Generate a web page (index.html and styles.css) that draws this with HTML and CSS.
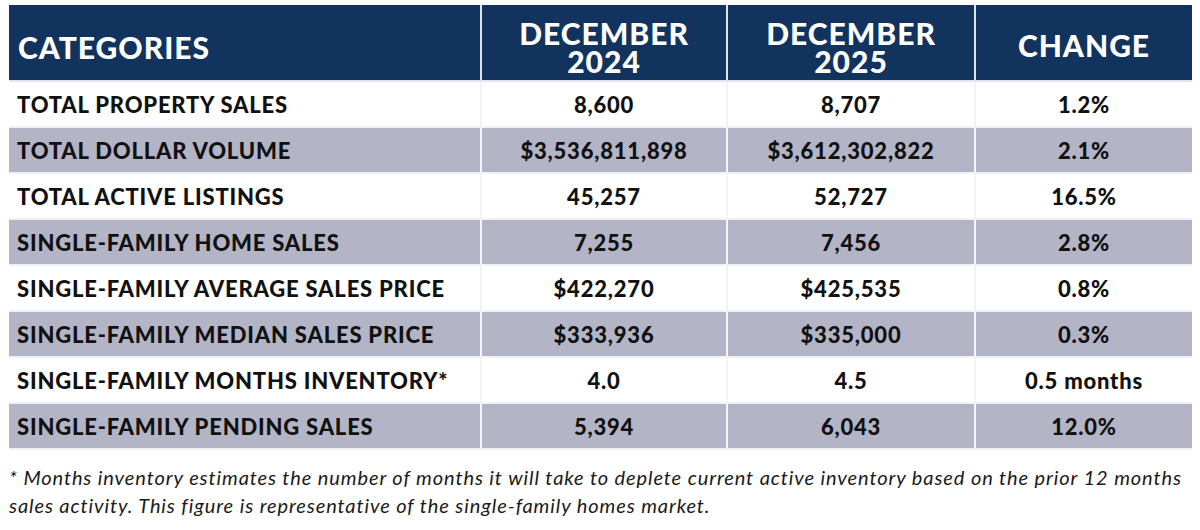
FILE: index.html
```html
<!DOCTYPE html>
<html>
<head>
<meta charset="utf-8">
<link rel="stylesheet" href="styles.css">
</head>
<body>
<table class="stats">
  <colgroup>
    <col class="c1"><col class="c2"><col class="c3"><col class="c4">
  </colgroup>
  <thead>
    <tr>
      <th class="cat">CATEGORIES</th>
      <th class="yr">DECEMBER<br>2024</th>
      <th class="yr">DECEMBER<br>2025</th>
      <th class="chg">CHANGE</th>
    </tr>
  </thead>
  <tbody>
    <tr><td class="cat">TOTAL PROPERTY SALES</td><td>8,600</td><td>8,707</td><td>1.2%</td></tr>
    <tr class="alt"><td class="cat">TOTAL DOLLAR VOLUME</td><td>$3,536,811,898</td><td>$3,612,302,822</td><td>2.1%</td></tr>
    <tr><td class="cat">TOTAL ACTIVE LISTINGS</td><td>45,257</td><td>52,727</td><td>16.5%</td></tr>
    <tr class="alt"><td class="cat">SINGLE-FAMILY HOME SALES</td><td>7,255</td><td>7,456</td><td>2.8%</td></tr>
    <tr><td class="cat">SINGLE-FAMILY AVERAGE SALES PRICE</td><td>$422,270</td><td>$425,535</td><td>0.8%</td></tr>
    <tr class="alt"><td class="cat">SINGLE-FAMILY MEDIAN SALES PRICE</td><td>$333,936</td><td>$335,000</td><td>0.3%</td></tr>
    <tr><td class="cat">SINGLE-FAMILY MONTHS INVENTORY*</td><td>4.0</td><td>4.5</td><td>0.5 months</td></tr>
    <tr class="alt"><td class="cat">SINGLE-FAMILY PENDING SALES</td><td>5,394</td><td>6,043</td><td>12.0%</td></tr>
  </tbody>
</table>
<p class="note">* Months inventory estimates the number of months it will take to deplete current active inventory based on the prior 12 months<br>sales activity. This figure is representative of the single-family homes market.</p>
</body>
</html>
```
FILE: styles.css
```css
html, body {
  margin: 0;
  padding: 0;
  background: #ffffff;
}
body {
  padding: 5px 8px 0 9px;
  font-family: Lato, "Noto Sans", sans-serif;
  color: #111111;
}
.stats {
  border-collapse: collapse;
  width: 1183px;
  table-layout: fixed;
}
.c1 { width: 472px; }
.c2 { width: 246px; }
.c3 { width: 248px; }
.c4 { width: 217px; }
.stats th {
  background: #11335e;
  color: #ffffff;
  font-weight: 900;
  font-size: 30px;
  line-height: 28.5px;
  height: 75px;
  padding: 0;
  text-align: center;
  vertical-align: middle;
  border: 2px solid #dfe5ee;
  border-top: none;
  letter-spacing: 1px;
}
.stats th.yr {
  padding-top: 9px;
  height: 66px;
}
.stats th.cat {
  text-align: left;
  padding: 10px 0 0 9px;
  height: 65px;
  border-left: none;
}
.stats th.chg {
  padding-top: 6px;
  height: 69px;
  border-right: none;
}
.stats td {
  font-weight: 900;
  font-size: 22px;
  height: 44px;
  padding: 0;
  text-align: center;
  border: 2px solid #eef1f5;
  border-left-color: #f2f4f7;
  border-right-color: #f2f4f7;
  letter-spacing: 0.8px;
}
.stats td.cat {
  text-align: left;
  padding-left: 8px;
  border-left: none;
}
.stats td:last-child { border-right: none; }
.stats tr.alt td {
  background: #b3b5c7;
  border-left-color: #f4f5f8;
  border-right-color: #f4f5f8;
}
.note {
  margin: 13px 0 0 0;
  font-style: italic;
  font-size: 20px;
  line-height: 28px;
  letter-spacing: 0.9px;
  color: #1a1a1a;
  white-space: nowrap;
}
```
